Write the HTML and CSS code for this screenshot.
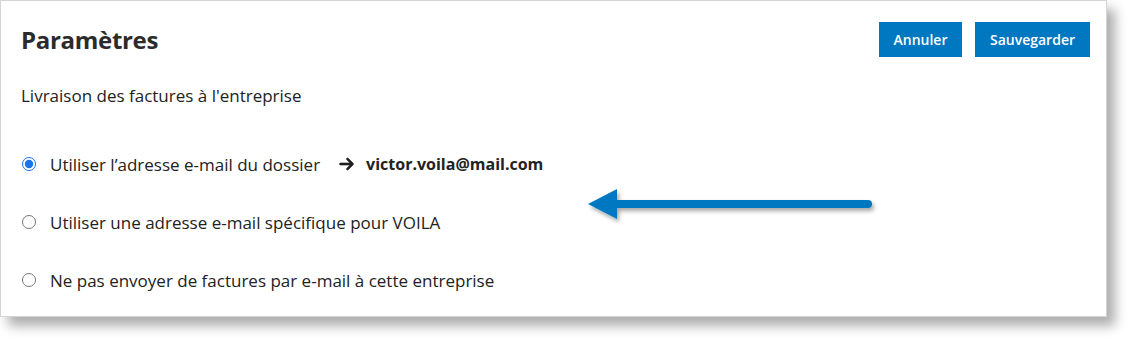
FILE: index.html
```html
<!DOCTYPE html>
<html lang="fr">
<head>
<meta charset="utf-8">
<title>Paramètres</title>
<link rel="stylesheet" href="styles.css">
</head>
<body>
<div class="card">
  <div class="header">
    <h1 class="title">Paramètres</h1>
    <div class="actions">
      <button class="btn">Annuler</button>
      <button class="btn">Sauvegarder</button>
    </div>
  </div>
  <p class="subtitle">Livraison des factures à l'entreprise</p>
  <div class="options">
    <label class="option">
      <input type="radio" name="delivery" checked>
      <span class="label">Utiliser l’adresse e-mail du dossier</span>
      <svg class="arrow-icon" viewBox="0 0 448 512" width="15" height="16"><path d="M438.6 278.6c12.5-12.5 12.5-32.8 0-45.3l-160-160c-12.5-12.5-32.8-12.5-45.3 0s-12.5 32.8 0 45.3L338.8 224 32 224c-17.7 0-32 14.3-32 32s14.3 32 32 32l306.7 0L233.4 393.4c-12.5 12.5-12.5 32.8 0 45.3s32.8 12.5 45.3 0l160-160z" fill="#1f1f1f" stroke="#1f1f1f" stroke-width="20"/></svg>
      <strong class="email">victor.voila@mail.com</strong>
    </label>
    <label class="option">
      <input type="radio" name="delivery">
      <span class="label">Utiliser une adresse e-mail spécifique pour VOILA</span>
    </label>
    <label class="option">
      <input type="radio" name="delivery">
      <span class="label">Ne pas envoyer de factures par e-mail à cette entreprise</span>
    </label>
  </div>
  <svg class="callout" width="300" height="50" viewBox="0 0 300 50">
    <defs>
      <filter id="sh" x="-10%" y="-50%" width="120%" height="200%">
        <feDropShadow dx="2" dy="3" stdDeviation="2" flood-color="#000" flood-opacity="0.35"/>
      </filter>
    </defs>
    <g filter="url(#sh)">
      <line x1="30" y1="18" x2="282" y2="18" stroke="#0078c1" stroke-width="8" stroke-linecap="round"/>
      <polygon points="2,18 31,3 31,33" fill="#0078c1"/>
    </g>
  </svg>
</div>
</body>
</html>
```
FILE: styles.css
```css
* { box-sizing: border-box; }
html, body {
  margin: 0;
  padding: 0;
  background: #ffffff;
}
body {
  font-family: "Open Sans", "Noto Sans", "Liberation Sans", sans-serif;
  color: #222222;
  min-height: 341px;
}
.card {
  position: relative;
  width: 1107px;
  height: 317px;
  border: 1px solid #d4d4d4;
  background: #ffffff;
  box-shadow: 8px 9px 11px rgba(0, 0, 0, 0.32);
  padding: 21px 16px 0 20px;
}
.header {
  display: flex;
  justify-content: space-between;
  align-items: center;
  height: 35px;
}
.title {
  margin: 0;
  font-size: 24px;
  font-weight: 700;
  letter-spacing: -0.3px;
  color: #2b2b2b;
}
.actions {
  display: flex;
  gap: 13px;
}
.btn {
  height: 35px;
  border: none;
  background: #0078c1;
  color: #ffffff;
  font-family: inherit;
  font-size: 14px;
  font-weight: 600;
  padding: 0 14px;
  cursor: pointer;
}
.btn:first-child { width: 83px; }
.btn:last-child { width: 115px; }
.subtitle {
  margin: 27px 0 0 0;
  font-size: 17px;
  line-height: 24px;
}
.options {
  margin-top: 27px;
  display: flex;
  flex-direction: column;
}
.option {
  display: flex;
  align-items: center;
  height: 58px;
  font-size: 17px;
}
.option input {
  width: 14px;
  height: 14px;
  margin: 0 14px 0 1px;
  accent-color: #1a73e8;
}
.arrow-icon {
  margin-left: 19px;
  margin-right: 12px;
}
.email {
  font-weight: 700;
  font-size: 16px;
}
.callout {
  position: absolute;
  left: 585px;
  top: 185px;
}
```
